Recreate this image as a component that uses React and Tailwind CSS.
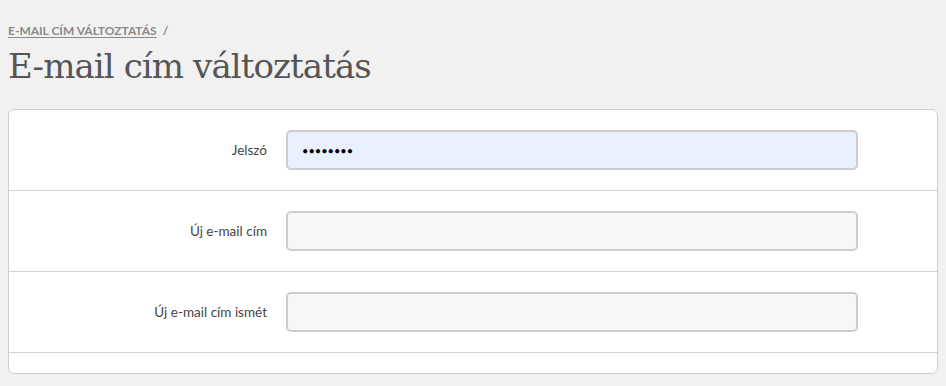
const FIELDS = [
  { label: 'Jelszó', type: 'password', value: 'password', autofill: true },
  { label: 'Új e-mail cím', type: 'email', value: '' },
  { label: 'Új e-mail cím ismét', type: 'email', value: '' },
]

export default function App() {
  return (
    <div className="min-h-screen bg-[#f1f1f1] px-2 pt-[22px] font-['Lato','Open_Sans',sans-serif]">
      {/* Breadcrumb */}
      <div className="flex items-center gap-[6px] text-[12px] font-bold uppercase text-[#8a8a8a] leading-[18px]">
        <a href="#" className="underline underline-offset-2">E-mail cím változtatás</a>
        <span>/</span>
      </div>

      {/* Title */}
      <h1 className="mt-[2px] text-[34px] leading-[48px] text-[#555] font-['DejaVu_Serif',serif] tracking-[-0.9px]">
        E-mail cím változtatás
      </h1>

      {/* Form card */}
      <div className="mt-[19px] rounded-[6px] border border-[#cfcfcf] bg-white">
        {FIELDS.map((f, i) => (
          <div key={i} className="flex h-[81px] items-center border-b border-[#d2d2d2]">
            <label className="w-[258px] text-right text-[13.5px] text-[#444]">{f.label}</label>
            <input
              type={f.type}
              defaultValue={f.value}
              className={
                'ml-[19px] h-[40px] w-[572px] rounded-[5px] border-2 border-[#cdcdcd] px-[14px] outline-none ' +
                (f.autofill ? 'bg-[#e8f0fe] text-[11px]' : 'bg-[#f7f7f7] text-[13px]')
              }
            />
          </div>
        ))}
        <div className="h-[20px]" />
      </div>
    </div>
  )
}
